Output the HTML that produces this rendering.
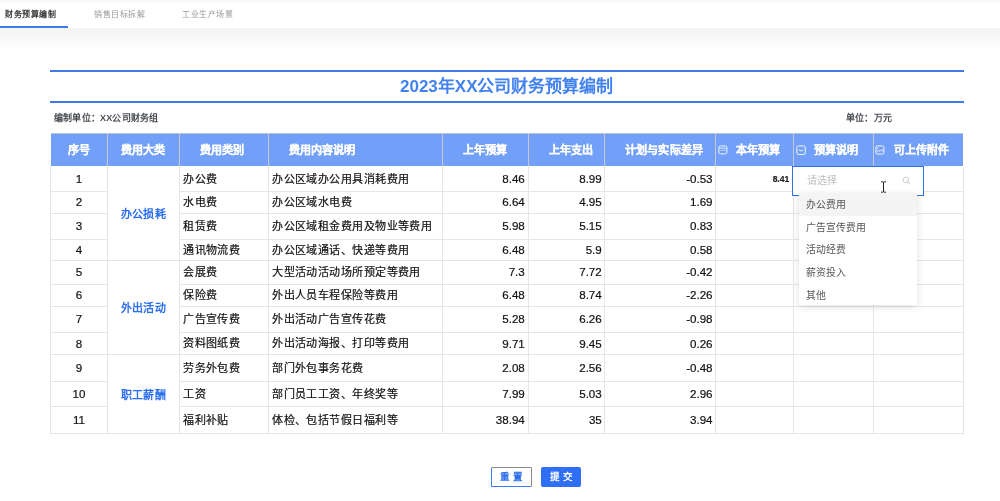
<!DOCTYPE html>
<html lang="zh-CN"><head><meta charset="utf-8"><style>
*{margin:0;padding:0;box-sizing:border-box}
html,body{width:1000px;height:501px;overflow:hidden;background:#fff;font-family:"Liberation Sans",sans-serif}
#w{position:absolute;left:0;top:0;width:1000px;height:501px;will-change:transform}
.a{position:absolute;white-space:nowrap}
.hl{position:absolute;height:1px;background:#e6e6e6}
.vl{position:absolute;width:1px;background:#e6e6e6}
.t{position:absolute;white-space:nowrap;font-size:11px;color:#111;line-height:1;letter-spacing:0.45px;-webkit-text-stroke:0.2px currentColor}
.n{font-size:11.6px;letter-spacing:0}
.h{position:absolute;white-space:nowrap;font-size:11.1px;color:#fff;font-weight:bold;line-height:1;-webkit-text-stroke:0.2px #fff}
</style></head><body><div id="w">

<div class="a" style="left:0;top:0;width:1000px;height:2px;background:#f9f9f9"></div>
<div class="a" style="left:0;top:27.5px;width:1000px;height:22px;background:linear-gradient(#f3f3f3,#f7f7f7 35%,#fff)"></div>
<div class="a" style="left:0;top:25.5px;width:68px;height:2px;background:#3b7bea"></div>
<div class="a" style="left:5px;top:11px;font-size:8px;line-height:1;color:#3a3a3a;font-weight:bold;letter-spacing:0.5px">财务预算编制</div>
<div class="a" style="left:94px;top:11px;font-size:8px;line-height:1;color:#999;letter-spacing:0.5px">销售目标拆解</div>
<div class="a" style="left:182px;top:11px;font-size:8px;line-height:1;color:#999;letter-spacing:0.5px">工业生产场景</div>
<div class="a" style="left:50px;top:70px;width:914px;height:2px;background:#3f7ae6"></div>
<div class="a" style="left:50px;top:101px;width:914px;height:2px;background:#3f7ae6"></div>
<div class="a" style="left:400px;top:78px;font-size:17px;line-height:1;color:#4282f0;font-weight:bold">2023年XX公司财务预算编制</div>
<div class="a" style="left:54px;top:114px;font-size:9px;line-height:1;color:#4a4d55;font-weight:bold;letter-spacing:0.2px">编制单位：<b>XX</b>公司财务组</div>
<div class="a" style="left:846px;top:114px;font-size:9px;line-height:1;color:#4a4d55;font-weight:bold;letter-spacing:0.2px">单位：万元</div>
<div class="a" style="left:50.5px;top:133.3px;width:912.7px;height:32.5px;background:#72a0f8;border-top:1px solid #b9c3d6"></div>
<div class="vl" style="left:107.1px;top:133.3px;height:32.5px;background:#c3c8d4"></div>
<div class="vl" style="left:178.9px;top:133.3px;height:32.5px;background:#c3c8d4"></div>
<div class="vl" style="left:267.9px;top:133.3px;height:32.5px;background:#c3c8d4"></div>
<div class="vl" style="left:441.8px;top:133.3px;height:32.5px;background:#c3c8d4"></div>
<div class="vl" style="left:527.7px;top:133.3px;height:32.5px;background:#c3c8d4"></div>
<div class="vl" style="left:604.2px;top:133.3px;height:32.5px;background:#c3c8d4"></div>
<div class="vl" style="left:714.7px;top:133.3px;height:32.5px;background:#c3c8d4"></div>
<div class="vl" style="left:792.7px;top:133.3px;height:32.5px;background:#c3c8d4"></div>
<div class="vl" style="left:873.1px;top:133.3px;height:32.5px;background:#c3c8d4"></div>
<div class="h" style="left:67.9px;top:145.0px">序号</div>
<div class="h" style="left:121.3px;top:145.0px">费用大类</div>
<div class="h" style="left:200.1px;top:145.0px">费用类别</div>
<div class="h" style="left:288.7px;top:145.0px">费用内容说明</div>
<div class="h" style="left:462.7px;top:145.0px">上年预算</div>
<div class="h" style="left:548.5px;top:145.0px">上年支出</div>
<div class="h" style="left:624.7px;top:145.0px;letter-spacing:0.25px">计划与实际差异</div>
<div class="h" style="left:735.5px;top:145.0px">本年预算</div>
<div class="h" style="left:813.7px;top:145.0px">预算说明</div>
<div class="h" style="left:893.7px;top:145.0px">可上传附件</div>
<div class="vl" style="left:50.0px;top:165.8px;height:267.5px"></div>
<div class="vl" style="left:107.1px;top:165.8px;height:267.5px"></div>
<div class="vl" style="left:178.9px;top:165.8px;height:267.5px"></div>
<div class="vl" style="left:267.9px;top:165.8px;height:267.5px"></div>
<div class="vl" style="left:441.8px;top:165.8px;height:267.5px"></div>
<div class="vl" style="left:527.7px;top:165.8px;height:267.5px"></div>
<div class="vl" style="left:604.2px;top:165.8px;height:267.5px"></div>
<div class="vl" style="left:714.7px;top:165.8px;height:267.5px"></div>
<div class="vl" style="left:792.7px;top:165.8px;height:267.5px"></div>
<div class="vl" style="left:873.1px;top:165.8px;height:267.5px"></div>
<div class="vl" style="left:962.7px;top:165.8px;height:267.5px"></div>
<div class="hl" style="left:50.0px;top:190.9px;width:57.1px"></div>
<div class="hl" style="left:178.9px;top:190.9px;width:784.8px"></div>
<div class="hl" style="left:50.0px;top:212.5px;width:57.1px"></div>
<div class="hl" style="left:178.9px;top:212.5px;width:784.8px"></div>
<div class="hl" style="left:50.0px;top:239.0px;width:57.1px"></div>
<div class="hl" style="left:178.9px;top:239.0px;width:784.8px"></div>
<div class="hl" style="left:50.0px;top:259.7px;width:913.7px"></div>
<div class="hl" style="left:50.0px;top:283.6px;width:57.1px"></div>
<div class="hl" style="left:178.9px;top:283.6px;width:784.8px"></div>
<div class="hl" style="left:50.0px;top:305.8px;width:57.1px"></div>
<div class="hl" style="left:178.9px;top:305.8px;width:784.8px"></div>
<div class="hl" style="left:50.0px;top:331.6px;width:57.1px"></div>
<div class="hl" style="left:178.9px;top:331.6px;width:784.8px"></div>
<div class="hl" style="left:50.0px;top:354.0px;width:913.7px"></div>
<div class="hl" style="left:50.0px;top:381.0px;width:57.1px"></div>
<div class="hl" style="left:178.9px;top:381.0px;width:784.8px"></div>
<div class="hl" style="left:50.0px;top:406.0px;width:57.1px"></div>
<div class="hl" style="left:178.9px;top:406.0px;width:784.8px"></div>
<div class="hl" style="left:50.0px;top:432.8px;width:913.7px"></div>
<div class="t n" style="left:50.5px;top:172.8px;width:57.1px;text-align:center">1</div>
<div class="t" style="left:183.1px;top:173.6px">办公费</div>
<div class="t" style="left:272.1px;top:173.6px">办公区域办公用具消耗费用</div>
<div class="t n" style="left:442.3px;top:172.8px;width:82.5px;text-align:right">8.46</div>
<div class="t n" style="left:528.2px;top:172.8px;width:73.6px;text-align:right">8.99</div>
<div class="t n" style="left:604.7px;top:172.8px;width:107.9px;text-align:right">-0.53</div>
<div class="t n" style="left:50.5px;top:196.4px;width:57.1px;text-align:center">2</div>
<div class="t" style="left:183.1px;top:197.2px">水电费</div>
<div class="t" style="left:272.1px;top:197.2px">办公区域水电费</div>
<div class="t n" style="left:442.3px;top:196.4px;width:82.5px;text-align:right">6.64</div>
<div class="t n" style="left:528.2px;top:196.4px;width:73.6px;text-align:right">4.95</div>
<div class="t n" style="left:604.7px;top:196.4px;width:107.9px;text-align:right">1.69</div>
<div class="t n" style="left:50.5px;top:220.4px;width:57.1px;text-align:center">3</div>
<div class="t" style="left:183.1px;top:221.2px">租赁费</div>
<div class="t" style="left:272.1px;top:221.2px">办公区域租金费用及物业等费用</div>
<div class="t n" style="left:442.3px;top:220.4px;width:82.5px;text-align:right">5.98</div>
<div class="t n" style="left:528.2px;top:220.4px;width:73.6px;text-align:right">5.15</div>
<div class="t n" style="left:604.7px;top:220.4px;width:107.9px;text-align:right">0.83</div>
<div class="t n" style="left:50.5px;top:244.0px;width:57.1px;text-align:center">4</div>
<div class="t" style="left:183.1px;top:244.8px">通讯物流费</div>
<div class="t" style="left:272.1px;top:244.8px">办公区域通话、快递等费用</div>
<div class="t n" style="left:442.3px;top:244.0px;width:82.5px;text-align:right">6.48</div>
<div class="t n" style="left:528.2px;top:244.0px;width:73.6px;text-align:right">5.9</div>
<div class="t n" style="left:604.7px;top:244.0px;width:107.9px;text-align:right">0.58</div>
<div class="t n" style="left:50.5px;top:266.3px;width:57.1px;text-align:center">5</div>
<div class="t" style="left:183.1px;top:267.1px">会展费</div>
<div class="t" style="left:272.1px;top:267.1px">大型活动活动场所预定等费用</div>
<div class="t n" style="left:442.3px;top:266.3px;width:82.5px;text-align:right">7.3</div>
<div class="t n" style="left:528.2px;top:266.3px;width:73.6px;text-align:right">7.72</div>
<div class="t n" style="left:604.7px;top:266.3px;width:107.9px;text-align:right">-0.42</div>
<div class="t n" style="left:50.5px;top:289.4px;width:57.1px;text-align:center">6</div>
<div class="t" style="left:183.1px;top:290.2px">保险费</div>
<div class="t" style="left:272.1px;top:290.2px">外出人员车程保险等费用</div>
<div class="t n" style="left:442.3px;top:289.4px;width:82.5px;text-align:right">6.48</div>
<div class="t n" style="left:528.2px;top:289.4px;width:73.6px;text-align:right">8.74</div>
<div class="t n" style="left:604.7px;top:289.4px;width:107.9px;text-align:right">-2.26</div>
<div class="t n" style="left:50.5px;top:313.4px;width:57.1px;text-align:center">7</div>
<div class="t" style="left:183.1px;top:314.2px">广告宣传费</div>
<div class="t" style="left:272.1px;top:314.2px">外出活动广告宣传花费</div>
<div class="t n" style="left:442.3px;top:313.4px;width:82.5px;text-align:right">5.28</div>
<div class="t n" style="left:528.2px;top:313.4px;width:73.6px;text-align:right">6.26</div>
<div class="t n" style="left:604.7px;top:313.4px;width:107.9px;text-align:right">-0.98</div>
<div class="t n" style="left:50.5px;top:337.5px;width:57.1px;text-align:center">8</div>
<div class="t" style="left:183.1px;top:338.3px">资料图纸费</div>
<div class="t" style="left:272.1px;top:338.3px">外出活动海报、打印等费用</div>
<div class="t n" style="left:442.3px;top:337.5px;width:82.5px;text-align:right">9.71</div>
<div class="t n" style="left:528.2px;top:337.5px;width:73.6px;text-align:right">9.45</div>
<div class="t n" style="left:604.7px;top:337.5px;width:107.9px;text-align:right">0.26</div>
<div class="t n" style="left:50.5px;top:362.2px;width:57.1px;text-align:center">9</div>
<div class="t" style="left:183.1px;top:363.0px">劳务外包费</div>
<div class="t" style="left:272.1px;top:363.0px">部门外包事务花费</div>
<div class="t n" style="left:442.3px;top:362.2px;width:82.5px;text-align:right">2.08</div>
<div class="t n" style="left:528.2px;top:362.2px;width:73.6px;text-align:right">2.56</div>
<div class="t n" style="left:604.7px;top:362.2px;width:107.9px;text-align:right">-0.48</div>
<div class="t n" style="left:50.5px;top:388.2px;width:57.1px;text-align:center">10</div>
<div class="t" style="left:183.1px;top:389.0px">工资</div>
<div class="t" style="left:272.1px;top:389.0px">部门员工工资、年终奖等</div>
<div class="t n" style="left:442.3px;top:388.2px;width:82.5px;text-align:right">7.99</div>
<div class="t n" style="left:528.2px;top:388.2px;width:73.6px;text-align:right">5.03</div>
<div class="t n" style="left:604.7px;top:388.2px;width:107.9px;text-align:right">2.96</div>
<div class="t n" style="left:50.5px;top:414.1px;width:57.1px;text-align:center">11</div>
<div class="t" style="left:183.1px;top:414.9px">福利补贴</div>
<div class="t" style="left:272.1px;top:414.9px">体检、包括节假日福利等</div>
<div class="t n" style="left:442.3px;top:414.1px;width:82.5px;text-align:right">38.94</div>
<div class="t n" style="left:528.2px;top:414.1px;width:73.6px;text-align:right">35</div>
<div class="t n" style="left:604.7px;top:414.1px;width:107.9px;text-align:right">3.94</div>
<div class="t" style="left:107.6px;top:208.6px;width:71.8px;text-align:center;color:#2b6ff0;font-weight:bold;-webkit-text-stroke:0">办公损耗</div>
<div class="t" style="left:107.6px;top:303.0px;width:71.8px;text-align:center;color:#2b6ff0;font-weight:bold;-webkit-text-stroke:0">外出活动</div>
<div class="t" style="left:107.6px;top:389.5px;width:71.8px;text-align:center;color:#2b6ff0;font-weight:bold;-webkit-text-stroke:0">职工薪酬</div>
<div class="t" style="left:715.2px;top:174.5px;width:74.0px;text-align:right;font-size:8.5px;letter-spacing:0;font-weight:bold;color:#222">8.41</div>
<svg class="a" style="left:717.6px;top:145px" width="10" height="10" viewBox="0 0 10 10"><rect x="0.9" y="0.9" width="8" height="8" rx="1.6" fill="none" stroke="#f0f5ff" stroke-width="1"/><path d="M1.5 3.1h7" stroke="#e8f0ff" stroke-width="0.9"/><path d="M2.6 5.4h1M4.4 5.4h1M6.2 5.4h1" stroke="#dce8ff" stroke-width="1.1"/></svg>
<svg class="a" style="left:795.6px;top:145px" width="10" height="10" viewBox="0 0 10 10"><rect x="0.9" y="0.9" width="8.4" height="8.6" rx="1.6" fill="none" stroke="#f0f5ff" stroke-width="1"/><path d="M3 4.6l2.1 1.5l2.1-1.5" fill="none" stroke="#f4f8ff" stroke-width="1"/></svg>
<svg class="a" style="left:875.4px;top:145px" width="10" height="10" viewBox="0 0 10 10"><rect x="0.9" y="0.9" width="8" height="8.2" rx="1.6" fill="none" stroke="#f0f5ff" stroke-width="1"/><path d="M1.4 7.4l2.1-2.3l1.5 1.3l1.6-1.8l2 2.3" fill="none" stroke="#f4f8ff" stroke-width="0.9"/><path d="M2.6 2.4v1.6" stroke="#eef4ff" stroke-width="0.9"/></svg>
<div class="a" style="left:792px;top:165.5px;width:131.5px;height:30px;border:1.5px solid #2f6fe8;background:#fff"></div>
<div class="a" style="left:806.5px;top:175.5px;font-size:9.9px;line-height:1;color:#bdbdbd">请选择</div>
<svg class="a" style="left:901.5px;top:175.5px" width="10" height="10" viewBox="0 0 10 10"><circle cx="3.8" cy="3.9" r="2.8" fill="none" stroke="#c4c4c4" stroke-width="0.9"/><path d="M5.9 6l2.3 2.4" stroke="#c4c4c4" stroke-width="1"/></svg>
<div class="a" style="left:798.5px;top:192.5px;width:118.5px;height:112.5px;background:#fff;box-shadow:0 2px 8px rgba(0,0,0,0.12)"></div>
<div class="a" style="left:798.5px;top:192.5px;width:118.5px;height:23px;background:#f4f4f4"></div>
<div class="a" style="left:806px;top:199.7px;font-size:9.9px;line-height:1;color:#555">办公费用</div>
<div class="a" style="left:806px;top:222.5px;font-size:9.9px;line-height:1;color:#555">广告宣传费用</div>
<div class="a" style="left:806px;top:245.3px;font-size:9.9px;line-height:1;color:#555">活动经费</div>
<div class="a" style="left:806px;top:268.1px;font-size:9.9px;line-height:1;color:#555">薪资投入</div>
<div class="a" style="left:806px;top:290.9px;font-size:9.9px;line-height:1;color:#555">其他</div>
<svg class="a" style="left:880px;top:180.5px" width="7" height="12" viewBox="0 0 7 12"><path d="M1 0.8h1.6q0.9 0 0.9 0.9v8.6q0 0.9-0.9 0.9H1M6 0.8H4.4q-0.9 0-0.9 0.9v8.6q0 0.9 0.9 0.9H6" fill="none" stroke="#222" stroke-width="1"/></svg>
<div class="a" style="left:490.8px;top:467px;width:41px;height:19.5px;border:1px solid;border-color:#8a8a8a #8a8a8a #3a7cf5 #3a7cf5;border-radius:1.5px;background:#fff"></div>
<div class="a" style="left:499.5px;top:471.5px;font-size:9.5px;line-height:1;color:#2f6fe8;letter-spacing:3px;font-weight:bold">重置</div>
<div class="a" style="left:540.7px;top:467px;width:40px;height:19.5px;border-radius:2px;background:#2f6ff5"></div>
<div class="a" style="left:549.5px;top:471.5px;font-size:9.5px;line-height:1;color:#fff;letter-spacing:3px;font-weight:bold">提交</div>
</div></body></html>
